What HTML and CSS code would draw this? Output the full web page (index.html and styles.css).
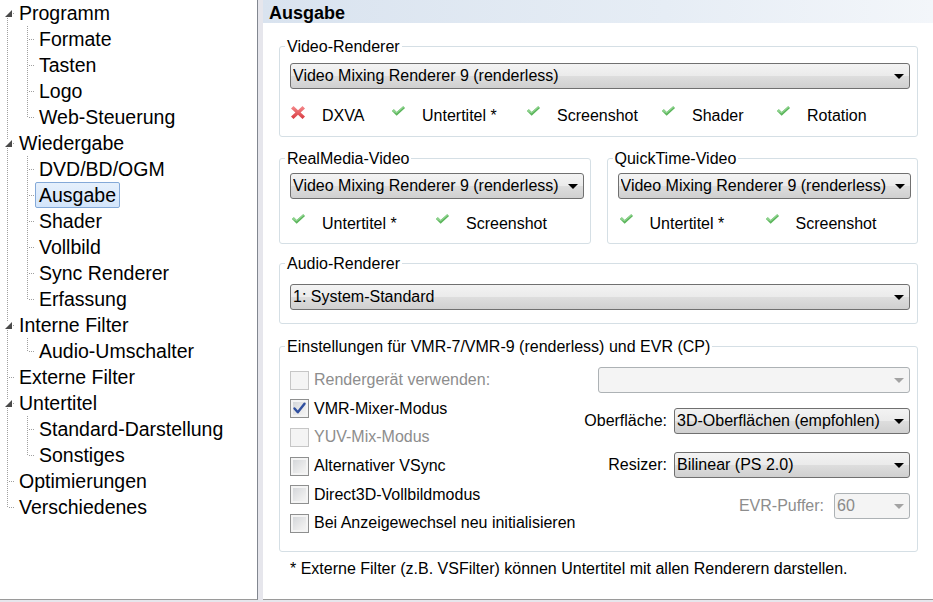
FILE: index.html
```html
<!DOCTYPE html>
<html lang="de">
<head>
<meta charset="utf-8">
<title>Ausgabe</title>
<link rel="stylesheet" href="styles.css">
</head>
<body>
<div class="window">
  <nav class="tree">
    <div class="row"><span class="g xf"><span class="tri"></span></span><span class="lbl">Programm</span></div>
    <div class="row"><span class="g v"></span><span class="g2 t"></span><span class="lbl">Formate</span></div>
    <div class="row"><span class="g v"></span><span class="g2 t"></span><span class="lbl">Tasten</span></div>
    <div class="row"><span class="g v"></span><span class="g2 t"></span><span class="lbl">Logo</span></div>
    <div class="row"><span class="g v"></span><span class="g2 l"></span><span class="lbl">Web-Steuerung</span></div>
    <div class="row"><span class="g xm"><span class="tri"></span></span><span class="lbl">Wiedergabe</span></div>
    <div class="row"><span class="g v"></span><span class="g2 t"></span><span class="lbl">DVD/BD/OGM</span></div>
    <div class="row"><span class="g v"></span><span class="g2 t"></span><span class="lbl selected">Ausgabe</span></div>
    <div class="row"><span class="g v"></span><span class="g2 t"></span><span class="lbl">Shader</span></div>
    <div class="row"><span class="g v"></span><span class="g2 t"></span><span class="lbl">Vollbild</span></div>
    <div class="row"><span class="g v"></span><span class="g2 t"></span><span class="lbl">Sync Renderer</span></div>
    <div class="row"><span class="g v"></span><span class="g2 l"></span><span class="lbl">Erfassung</span></div>
    <div class="row"><span class="g xm"><span class="tri"></span></span><span class="lbl">Interne Filter</span></div>
    <div class="row"><span class="g v"></span><span class="g2 l"></span><span class="lbl">Audio-Umschalter</span></div>
    <div class="row"><span class="g t"></span><span class="lbl">Externe Filter</span></div>
    <div class="row"><span class="g xm"><span class="tri"></span></span><span class="lbl">Untertitel</span></div>
    <div class="row"><span class="g v"></span><span class="g2 t"></span><span class="lbl">Standard-Darstellung</span></div>
    <div class="row"><span class="g v"></span><span class="g2 l"></span><span class="lbl">Sonstiges</span></div>
    <div class="row"><span class="g t"></span><span class="lbl">Optimierungen</span></div>
    <div class="row"><span class="g l"></span><span class="lbl">Verschiedenes</span></div>
  </nav>

  <main class="page">
    <div class="page-head">Ausgabe</div>
    <div class="page-body">

      <fieldset class="grp grp-video">
        <legend>Video-Renderer</legend>
        <div class="sel"><span class="sel-text">Video Mixing Renderer 9 (renderless)</span><span class="arrow"></span></div>
        <div class="status status-5">
          <div class="st"><span class="ico"><svg width="14" height="13" viewBox="0 0 14 13"><defs><linearGradient id="xr" x1="0" y1="0" x2="0" y2="1"><stop offset="0" stop-color="#f58a8c"/><stop offset="1" stop-color="#d83a40"/></linearGradient></defs><polygon points="0,2.5 2.5,0 7,4.2 11.5,0 14,2.5 9.6,6.5 14,10.5 11.5,13 7,8.8 2.5,13 0,10.5 4.4,6.5" fill="url(#xr)"/></svg></span><span>DXVA</span></div>
          <div class="st"><span class="ico"><svg class="ck" width="16" height="11" viewBox="0 0 16 11"><polygon points="1,5 3,3.2 6,6 13,0 15,1.8 6,10" fill="#5bb55b"/><polygon points="1,5 3,3.2 6,6 13,0 14,0.9 6,7.6" fill="#8fd48f"/></svg></span><span>Untertitel *</span></div>
          <div class="st"><span class="ico"><svg class="ck" width="16" height="11" viewBox="0 0 16 11"><polygon points="1,5 3,3.2 6,6 13,0 15,1.8 6,10" fill="#5bb55b"/><polygon points="1,5 3,3.2 6,6 13,0 14,0.9 6,7.6" fill="#8fd48f"/></svg></span><span>Screenshot</span></div>
          <div class="st"><span class="ico"><svg class="ck" width="16" height="11" viewBox="0 0 16 11"><polygon points="1,5 3,3.2 6,6 13,0 15,1.8 6,10" fill="#5bb55b"/><polygon points="1,5 3,3.2 6,6 13,0 14,0.9 6,7.6" fill="#8fd48f"/></svg></span><span>Shader</span></div>
          <div class="st"><span class="ico"><svg class="ck" width="16" height="11" viewBox="0 0 16 11"><polygon points="1,5 3,3.2 6,6 13,0 15,1.8 6,10" fill="#5bb55b"/><polygon points="1,5 3,3.2 6,6 13,0 14,0.9 6,7.6" fill="#8fd48f"/></svg></span><span>Rotation</span></div>
        </div>
      </fieldset>

      <div class="pair">
        <fieldset class="grp grp-small">
          <legend>RealMedia-Video</legend>
          <div class="sel"><span class="sel-text">Video Mixing Renderer 9 (renderless)</span><span class="arrow"></span></div>
          <div class="status status-rm">
            <div class="st"><span class="ico"><svg class="ck" width="16" height="11" viewBox="0 0 16 11"><polygon points="1,5 3,3.2 6,6 13,0 15,1.8 6,10" fill="#5bb55b"/><polygon points="1,5 3,3.2 6,6 13,0 14,0.9 6,7.6" fill="#8fd48f"/></svg></span><span>Untertitel *</span></div>
            <div class="st"><span class="ico"><svg class="ck" width="16" height="11" viewBox="0 0 16 11"><polygon points="1,5 3,3.2 6,6 13,0 15,1.8 6,10" fill="#5bb55b"/><polygon points="1,5 3,3.2 6,6 13,0 14,0.9 6,7.6" fill="#8fd48f"/></svg></span><span>Screenshot</span></div>
          </div>
        </fieldset>
        <fieldset class="grp grp-small">
          <legend>QuickTime-Video</legend>
          <div class="sel"><span class="sel-text">Video Mixing Renderer 9 (renderless)</span><span class="arrow"></span></div>
          <div class="status status-qt">
            <div class="st"><span class="ico"><svg class="ck" width="16" height="11" viewBox="0 0 16 11"><polygon points="1,5 3,3.2 6,6 13,0 15,1.8 6,10" fill="#5bb55b"/><polygon points="1,5 3,3.2 6,6 13,0 14,0.9 6,7.6" fill="#8fd48f"/></svg></span><span>Untertitel *</span></div>
            <div class="st"><span class="ico"><svg class="ck" width="16" height="11" viewBox="0 0 16 11"><polygon points="1,5 3,3.2 6,6 13,0 15,1.8 6,10" fill="#5bb55b"/><polygon points="1,5 3,3.2 6,6 13,0 14,0.9 6,7.6" fill="#8fd48f"/></svg></span><span>Screenshot</span></div>
          </div>
        </fieldset>
      </div>

      <fieldset class="grp grp-audio">
        <legend>Audio-Renderer</legend>
        <div class="sel"><span class="sel-text">1: System-Standard</span><span class="arrow"></span></div>
      </fieldset>

      <fieldset class="grp grp-vmr">
        <legend>Einstellungen für VMR-7/VMR-9 (renderless) und EVR (CP)</legend>
        <div class="vmr">
          <div class="checks">
            <div class="chk disabled"><span class="box"></span><span>Rendergerät verwenden:</span></div>
            <div class="chk"><span class="box"><svg width="15" height="15" viewBox="0 0 15 15"><path d="M2.5 7.5 L5.8 11.3 L12.5 2.8" fill="none" stroke="#2f4f9f" stroke-width="2.4" stroke-linecap="round" stroke-linejoin="round"/></svg></span><span>VMR-Mixer-Modus</span></div>
            <div class="chk disabled"><span class="box"></span><span>YUV-Mix-Modus</span></div>
            <div class="chk"><span class="box"></span><span>Alternativer VSync</span></div>
            <div class="chk"><span class="box"></span><span>Direct3D-Vollbildmodus</span></div>
            <div class="chk"><span class="box"></span><span>Bei Anzeigewechsel neu initialisieren</span></div>
          </div>
          <div class="opts">
            <div class="opt opt-1"><div class="sel dis w-dev"><span class="sel-text"></span><span class="arrow"></span></div></div>
            <div class="opt opt-2"><span class="opt-lbl">Oberfläche:</span><div class="sel w-mid"><span class="sel-text">3D-Oberflächen (empfohlen)</span><span class="arrow"></span></div></div>
            <div class="opt opt-3"><span class="opt-lbl">Resizer:</span><div class="sel w-mid"><span class="sel-text">Bilinear (PS 2.0)</span><span class="arrow"></span></div></div>
            <div class="opt opt-4"><span class="opt-lbl disabled evr">EVR-Puffer:</span><div class="sel dis w-evr"><span class="sel-text">60</span><span class="arrow"></span></div></div>
          </div>
        </div>
      </fieldset>

      <p class="note">* Externe Filter (z.B. VSFilter) können Untertitel mit allen Renderern darstellen.</p>
    </div>
  </main>
</div>
</body>
</html>
```

FILE: styles.css
```css
:root {
  --vd: repeating-linear-gradient(to bottom, #a0a0a0 0 1px, transparent 1px 2px);
  --hd: repeating-linear-gradient(to right, #a0a0a0 0 1px, transparent 1px 2px);
}

* { box-sizing: border-box; }

html, body {
  margin: 0;
  padding: 0;
}

body {
  width: 933px;
  height: 602px;
  overflow: hidden;
  background: #e6e6ec;
  font-family: "Liberation Sans", Arial, sans-serif;
  color: #000;
}

.window {
  display: flex;
  height: 600px;
}

/* ---------- tree ---------- */
.tree {
  width: 258px;
  height: 600px;
  flex: none;
  background: #fff;
  border-right: 1px solid #828790;
  border-bottom: 1px solid #9a9a9a;
  margin-right: 5px;
  font-size: 19.5px;
}

.row {
  display: flex;
  align-items: center;
  height: 26px;
}

.g {
  width: 15px;
  height: 26px;
  flex: none;
  display: flex;
  align-items: center;
}

.g2 {
  width: 20px;
  height: 26px;
  flex: none;
}

.g.v { background: var(--vd) 7px 0 / 1px 26px no-repeat; }
.g.t { background: var(--vd) 7px 0 / 1px 26px no-repeat, var(--hd) 9px 13px / 6px 1px no-repeat; }
.g.l { background: var(--vd) 7px 0 / 1px 13px no-repeat, var(--hd) 9px 13px / 6px 1px no-repeat; }
.g.xf { background: var(--vd) 7px 18px / 1px 8px no-repeat, var(--hd) 13px 13px / 2px 1px no-repeat; }
.g.xm { background: var(--vd) 7px 0 / 1px 26px no-repeat, var(--hd) 13px 13px / 2px 1px no-repeat; }

.g2.t { background: var(--vd) 12px 0 / 1px 26px no-repeat, var(--hd) 14px 13px / 6px 1px no-repeat; }
.g2.l { background: var(--vd) 12px 0 / 1px 13px no-repeat, var(--hd) 14px 13px / 6px 1px no-repeat; }

.tri {
  display: block;
  width: 0;
  height: 0;
  margin-left: 5px;
  margin-top: 1px;
  border-style: solid;
  border-width: 0 0 7px 7px;
  border-color: transparent transparent #4a4a4a transparent;
  background: #fff;
}

.lbl {
  height: 26px;
  line-height: 24px;
  padding: 0 3px;
  border: 1px solid transparent;
  border-radius: 2px;
  white-space: nowrap;
}

.lbl.selected {
  background: linear-gradient(#e6f0fc, #d3e5fb);
  border-color: #84a9d8;
}

/* ---------- page ---------- */
.page {
  flex: 1;
  height: 600px;
  background: #fff;
  border-bottom: 1px solid #9a9a9a;
  font-size: 16px;
}

.page-head {
  height: 23px;
  padding: 3px 0 0 6px;
  font-weight: bold;
  font-size: 18px;
  line-height: 21px;
  background: linear-gradient(to right, #d9e3ef, #e6edf5 60%, #f3f6fa);
}

.page-body {
  padding: 0 15px 0 16px;
}

.grp {
  margin: 0;
  min-width: 0;
  border: 1px solid #d5dfe5;
  border-radius: 3px;
}

.grp legend {
  font-size: 16px;
  line-height: 18px;
  padding: 1px 2px 0;
  margin-left: -5px;
}

.grp-video {
  margin-top: 14px;
  padding: 7px 7px 10px 10px;
}

.pair {
  display: flex;
  gap: 16px;
  margin-top: 12px;
}

.grp-small {
  flex: 1;
  padding: 5px 6px 9px 10px;
}

.grp-audio {
  margin-top: 10px;
  padding: 11px 7px 13px 10px;
}

.grp-vmr {
  margin-top: 13px;
  padding: 10px 7px 13px 10px;
}

/* combo boxes */
.sel {
  height: 26px;
  display: flex;
  align-items: center;
  padding-left: 2px;
  border: 1px solid #707070;
  border-radius: 3px;
  background: linear-gradient(#f3f3f3, #ebebeb 48%, #dddddd 52%, #d0d0d0);
  white-space: nowrap;
  line-height: 20px;
}

.sel-text {
  flex: 1;
  overflow: hidden;
}

.arrow {
  flex: none;
  width: 0;
  height: 0;
  margin: 1px 5px 0 4px;
  border-left: 5px solid transparent;
  border-right: 5px solid transparent;
  border-top: 5px solid #000;
}

.sel.dis {
  background: #f4f4f4;
  border-color: #adb2b5;
  color: #8a8a8a;
}

.sel.dis .arrow { border-top-color: #a3a3a3; }

.w-dev { width: 312px; }
.w-mid { width: 236px; }
.w-evr { width: 76px; }

/* status rows */
.status {
  display: grid;
  height: 20px;
  line-height: 20px;
}

.grp-video .status { margin-top: 17px; }
.grp-small .status { margin-top: 15px; }

.status-5 { grid-template-columns: 100px 135px 135px 115px auto; }
.status-rm { grid-template-columns: 144px auto; }
.status-qt { grid-template-columns: 146px auto; }

.st {
  display: flex;
  align-items: flex-start;
  white-space: nowrap;
}

.ico {
  width: 16px;
  height: 20px;
  margin-right: 16px;
  display: flex;
  align-items: flex-start;
  padding-left: 1px;
}

.ico svg { display: block; }

/* VMR settings */
.vmr {
  display: flex;
}

.checks {
  flex: none;
  display: grid;
  grid-auto-rows: 28.6px;
}

.chk {
  display: flex;
  align-items: center;
  white-space: nowrap;
}

.box {
  width: 19px;
  height: 19px;
  margin-right: 5px;
  border: 1px solid #8e8f8f;
  background: linear-gradient(135deg, #cfd2d6, #eeeeee 70%, #f6f6f6);
  box-shadow: inset 0 0 0 2px #f4f4f4;
  display: flex;
  align-items: center;
  justify-content: center;
}

.box svg { display: block; }

.chk.disabled { color: #8d8d8d; }
.chk.disabled .box {
  border-color: #c6c6c6;
  background: #f4f4f4;
  box-shadow: none;
}

.opts {
  flex: 1;
  display: flex;
  flex-direction: column;
  align-items: flex-end;
}

.opt {
  display: flex;
  align-items: center;
  gap: 7px;
  white-space: nowrap;
}

.opt-1 { margin-top: 1px; }
.opt-2 { margin-top: 15px; }
.opt-3 { margin-top: 18px; }
.opt-4 { margin-top: 15px; }

.opt-lbl.disabled { color: #8d8d8d; }
.opt-lbl.evr { margin-right: 3px; }

.note {
  margin: 7px 0 0;
  padding-left: 11px;
  line-height: 20px;
  font-size: 16px;
}
```
